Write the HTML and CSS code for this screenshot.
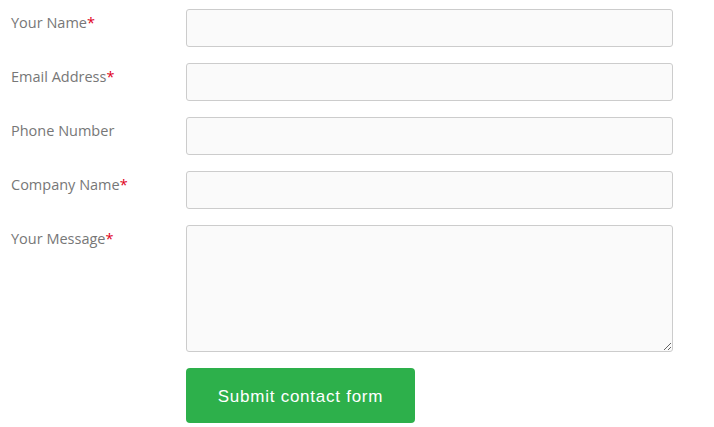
FILE: index.html
```html
<!DOCTYPE html>
<html>
<head>
<meta charset="utf-8">
<link rel="stylesheet" href="styles.css">
</head>
<body>
<form class="form">
  <label class="label">Your Name<span class="req">*</span></label>
  <input class="field" type="text">
  <label class="label">Email Address<span class="req">*</span></label>
  <input class="field" type="text">
  <label class="label">Phone Number</label>
  <input class="field" type="text">
  <label class="label">Company Name<span class="req">*</span></label>
  <input class="field" type="text">
  <label class="label">Your Message<span class="req">*</span></label>
  <textarea class="field area"></textarea>
  <div></div>
  <div><button class="submit" type="button">Submit contact form</button></div>
</form>
</body>
</html>
```
FILE: styles.css
```css
html, body {
  margin: 0;
  padding: 0;
  background: #fff;
}
.form {
  display: grid;
  grid-template-columns: 175px 487px;
  row-gap: 16px;
  padding: 9px 0 0 11px;
  font-family: "Open Sans", sans-serif;
}
.label {
  font-size: 14.5px;
  line-height: 20px;
  color: #777;
  padding-top: 4px;
}
.req {
  color: #e0001b;
}
.field {
  box-sizing: border-box;
  height: 38px;
  width: 487px;
  margin: 0;
  border: 1px solid #ccc;
  border-radius: 3px;
  background: #fafafa;
  font-family: inherit;
  font-size: 14px;
  padding: 6px 10px;
}
.area {
  height: 127px;
  resize: vertical;
  display: block;
}
.submit {
  display: block;
  box-sizing: border-box;
  width: 229px;
  height: 55px;
  border: none;
  border-radius: 4px;
  background: #2db04b;
  color: #fff;
  font-family: "Liberation Sans", Arial, sans-serif;
  font-size: 17px;
  letter-spacing: 0.75px;
  padding: 3px 0 0 0;
  margin: 0;
}
```
